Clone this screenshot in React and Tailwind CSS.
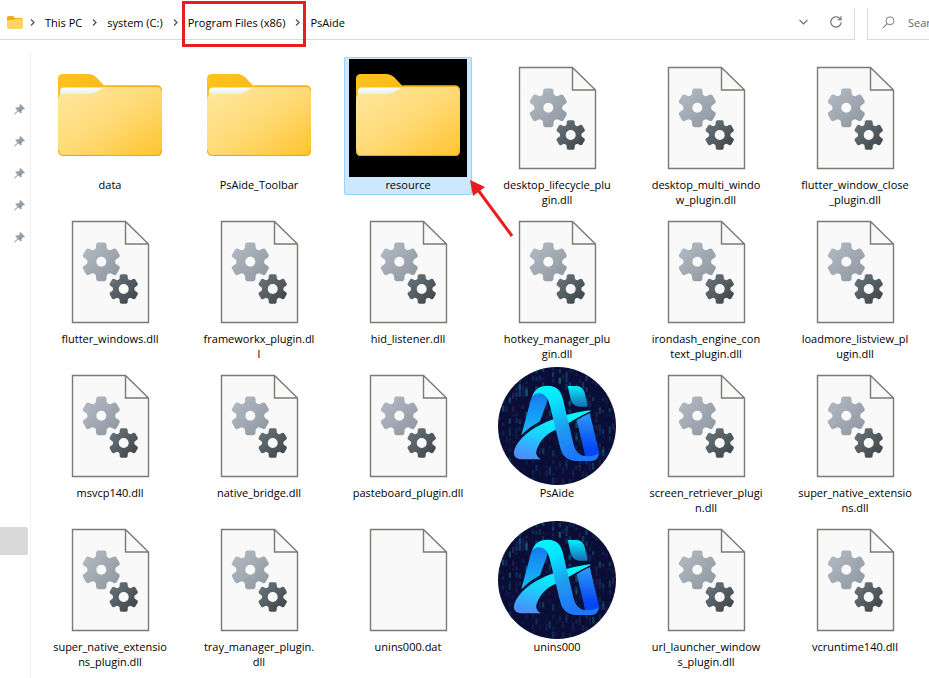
import React from 'react';

const crumbs = ['This PC', 'system (C:)', 'Program Files (x86)', 'PsAide'];

const files = [
  { kind: 'folder', lines: ['data'] },
  { kind: 'folder', lines: ['PsAide_Toolbar'] },
  { kind: 'folder', lines: ['resource'], selected: true },
  { kind: 'dll', lines: ['desktop_lifecycle_plu', 'gin.dll'] },
  { kind: 'dll', lines: ['desktop_multi_windo', 'w_plugin.dll'] },
  { kind: 'dll', lines: ['flutter_window_close', '_plugin.dll'] },
  { kind: 'dll', lines: ['flutter_windows.dll'] },
  { kind: 'dll', lines: ['frameworkx_plugin.dl', 'l'] },
  { kind: 'dll', lines: ['hid_listener.dll'] },
  { kind: 'dll', lines: ['hotkey_manager_plu', 'gin.dll'] },
  { kind: 'dll', lines: ['irondash_engine_con', 'text_plugin.dll'] },
  { kind: 'dll', lines: ['loadmore_listview_pl', 'ugin.dll'] },
  { kind: 'dll', lines: ['msvcp140.dll'] },
  { kind: 'dll', lines: ['native_bridge.dll'] },
  { kind: 'dll', lines: ['pasteboard_plugin.dll'] },
  { kind: 'app', lines: ['PsAide'] },
  { kind: 'dll', lines: ['screen_retriever_plugi', 'n.dll'] },
  { kind: 'dll', lines: ['super_native_extensio', 'ns.dll'] },
  { kind: 'dll', lines: ['super_native_extensio', 'ns_plugin.dll'] },
  { kind: 'dll', lines: ['tray_manager_plugin.', 'dll'] },
  { kind: 'file', lines: ['unins000.dat'] },
  { kind: 'app', lines: ['unins000'] },
  { kind: 'dll', lines: ['url_launcher_window', 's_plugin.dll'] },
  { kind: 'dll', lines: ['vcruntime140.dll'] },
];

// outline of a six-toothed gear with a round hole
function gearPath(cx, cy, r, hole) {
  const pt = (deg, rad) => {
    const a = ((deg - 90) * Math.PI) / 180;
    return `${(cx + rad * Math.cos(a)).toFixed(2)} ${(cy + rad * Math.sin(a)).toFixed(2)}`;
  };
  let d = '';
  for (let i = 0; i < 6; i++) {
    const a = i * 60;
    d += `${i === 0 ? 'M' : 'L'}${pt(a - 22, r * 0.74)} L${pt(a - 16, r * 0.94)} Q${pt(a - 14, r)} ${pt(a - 9, r)} L${pt(a + 9, r)} Q${pt(a + 14, r)} ${pt(a + 16, r * 0.94)} L${pt(a + 22, r * 0.74)} Q${pt(a + 30, r * 0.68)} ${pt(a + 38, r * 0.74)} `;
  }
  return `${d}Z M${cx - hole} ${cy} a${hole} ${hole} 0 1 0 ${hole * 2} 0 a${hole} ${hole} 0 1 0 ${-hole * 2} 0Z`;
}

const bigGear = gearPath(50.3, 48.8, 19.6, 5);
const smallGear = gearPath(72.7, 76, 15, 5);

// speckles in columns behind the app logo, brighter towards the top
const specks = Array.from({ length: 420 }, (_, i) => {
  const r = Math.abs(Math.sin(i * 12.9898) * 43758.5453) % 1;
  const s = Math.abs(Math.sin(i * 78.233) * 12543.123) % 1;
  const y = r * 345;
  return {
    x: 5 + (i % 35) * 10,
    y,
    w: 7,
    h: 6 + s * 14,
    tone: ['#12406f', '#164f80', '#1f2463', '#14616f', '#33285a'][i % 5],
    o: (0.2 + s * 0.6) * (y < 170 ? 1 : 0.6),
  };
});

const swoosh =
  'M280 133 C235 138 195 150 165 161 C118 178 75 206 57 240 C44 266 52 279 75 280 H132 C118 272 115 262 120 249 C130 222 152 200 180 190 C212 174 245 152 280 136Z';

function Defs() {
  return (
    <svg className="absolute h-0 w-0" aria-hidden="true">
      <defs>
        <linearGradient id="tab" x1="0" y1="0" x2="1" y2="1">
          <stop offset="0" stopColor="#ffc31c" />
          <stop offset="1" stopColor="#f6ac0c" />
        </linearGradient>
        <linearGradient id="front" x1="0" y1="0" x2="1" y2="1">
          <stop offset="0" stopColor="#ffe8a2" />
          <stop offset="0.5" stopColor="#ffda76" />
          <stop offset="1" stopColor="#ffc42e" />
        </linearGradient>
        <linearGradient id="paper" x1="0" y1="0" x2="0" y2="1">
          <stop offset="0" stopColor="#ffffff" />
          <stop offset="1" stopColor="#d3d6dc" />
        </linearGradient>
        <linearGradient id="gearLight" x1="0" y1="0" x2="1" y2="1">
          <stop offset="0" stopColor="#b4bdc6" />
          <stop offset="1" stopColor="#8d959e" />
        </linearGradient>
        <linearGradient id="gearDark" x1="0" y1="0" x2="1" y2="1">
          <stop offset="0" stopColor="#6b787f" />
          <stop offset="1" stopColor="#3c4144" />
        </linearGradient>
        <linearGradient id="legLeft" x1="0" y1="0" x2="0" y2="1">
          <stop offset="0" stopColor="#1877f0" />
          <stop offset="1" stopColor="#12c0fb" />
        </linearGradient>
        <linearGradient id="ribbon" x1="0" y1="0" x2="0.35" y2="1">
          <stop offset="0" stopColor="#02fbfd" />
          <stop offset="0.3" stopColor="#06e4fb" />
          <stop offset="0.65" stopColor="#1f9cf0" />
          <stop offset="1" stopColor="#1e78fb" />
        </linearGradient>
        <linearGradient id="swoosh" x1="0.6" y1="0" x2="0.2" y2="1">
          <stop offset="0" stopColor="#02fbfa" />
          <stop offset="0.45" stopColor="#14dcfb" />
          <stop offset="1" stopColor="#4c8cfb" />
        </linearGradient>
        <linearGradient id="stem" x1="0" y1="0" x2="0" y2="1">
          <stop offset="0" stopColor="#2c9cfa" />
          <stop offset="0.75" stopColor="#0546f3" />
        </linearGradient>
        <linearGradient id="dot" x1="0" y1="0" x2="0" y2="1">
          <stop offset="0" stopColor="#02eefc" />
          <stop offset="1" stopColor="#1a6cb4" />
        </linearGradient>
        <clipPath id="disc">
          <circle cx="180" cy="180" r="177" />
        </clipPath>
      </defs>
    </svg>
  );
}

function FolderIcon() {
  return (
    <svg viewBox="0 0 118 118" className="h-full w-full">
      <path d="M7 42 V20 Q7 15 12 15 H37 Q42 15 45.500 18.500 L53 26.500 H106 Q111 26.500 111 31.500 V92 H7Z" fill="url(#tab)" />
      <path d="M9 42 V32.500 Q9 28.500 13 28.500 H56 L46 42Z" fill="url(#paper)" />
      <path d="M7 41 Q7 35 12 35 H37 Q41 35 44 33.500 L51 29.500 Q53.500 28 57 28 H106 Q111 28 111 33 V92 Q111 97 106 97 H12 Q7 97 7 92Z" fill="url(#front)" />
      <path d="M7.500 91 Q7.500 96.500 12.500 96.500 H105.500 Q110.500 96.500 110.500 91" fill="none" stroke="#e8a522" strokeWidth="1" />
      <path d="M54 27 H106 Q110.500 27 110.500 32" fill="none" stroke="#eaae2c" strokeWidth="1" />
    </svg>
  );
}

function FileIcon({ gears }) {
  return (
    <svg viewBox="0 0 118 118" className="h-full w-full">
      <path d="M21.500 8.500 H74.500 L97.500 31 V109.500 H21.500Z" fill="#f9f9f9" />
      <path d="M21.500 8.500 H74.500 L97.500 31 V109.500 H21.500Z M74.500 8.500 V31 H97.500" fill="none" stroke="#7a7974" strokeWidth="1.400" />
      {gears && (
        <>
          <path d={bigGear} fill="url(#gearLight)" fillRule="evenodd" />
          <path d={smallGear} fill="url(#gearDark)" fillRule="evenodd" />
        </>
      )}
    </svg>
  );
}

function AppLogo() {
  return (
    <svg viewBox="3 3 354 354" className="h-full w-full">
      <circle cx="180" cy="180" r="177" fill="#0a0d35" />
      <g clipPath="url(#disc)">
        {specks.map((s, i) => (
          <rect key={i} x={s.x} y={s.y} width={s.w} height={s.h} fill={s.tone} opacity={s.o} />
        ))}
      </g>
      {/* left leg of the A */}
      <path d="M73 208 L97 118 C102 95 110 80 126 78 C145 80 152 95 150 108 L129 166 C106 178 88 192 73 208Z" fill="url(#legLeft)" />
      {/* stem and dot of the i */}
      <path d="M239 162 C252 154 266 146 278 141 L305 252 C309 272 300 284 284 285 L250 280 L264 268Z" fill="url(#stem)" />
      <path d="M212 60 H238 C253 61 261 70 264 84 L272 122 H246 C230 120 223 110 220 96Z" fill="url(#dot)" />
      {/* crossbar */}
      <path d={swoosh} fill="none" stroke="#081238" strokeWidth="8" />
      <path d={swoosh} fill="url(#swoosh)" />
      {/* ribbon over the top and down the right */}
      <path d="M103 98 C110 72 126 59 152 59 C180 59 191 75 197 96 L230 236 C236 256 246 267 262 270 C280 273 294 269 305 262 C303 278 296 285 280 285 H240 C212 285 196 270 190 246 L158 116 C151 92 140 82 126 82 C115 82 107 88 103 98Z" fill="url(#ribbon)" />
    </svg>
  );
}

function Pin() {
  return (
    <svg viewBox="0 0 11 11" className="h-[11px] w-[11px]">
      <path d="M6.300 0 L11 4.600 L10 5.300 L8.900 5.300 L7.600 7 L7.600 8.800 L6.700 9.600 L4.200 7.300 L0.900 10.600 L0.200 10.600 L0.200 9.900 L3.500 6.600 L1.200 4.200 L2 3.400 L3.900 3.400 L5.600 2.200 L5.600 0.800Z" fill="#929da5" />
    </svg>
  );
}

function Chevron() {
  return (
    <svg viewBox="0 0 5 7" className="h-[7px] w-[5px] shrink-0">
      <path d="M1 0.500 L4 3.500 L1 6.500" fill="none" stroke="#555" strokeWidth="1.300" />
    </svg>
  );
}

function Tile({ file }) {
  return (
    <button
      className={`relative flex h-[138px] flex-col items-center border pt-px ${
        file.selected ? 'rounded-xs border-[#99d1ff] bg-[#cce8ff]' : 'border-transparent'
      }`}
    >
      <span className={`h-[118px] w-[118px] shrink-0 ${file.selected ? 'bg-black' : ''}`}>
        {file.kind === 'folder' && <FolderIcon />}
        {file.kind === 'app' && <AppLogo />}
        {(file.kind === 'dll' || file.kind === 'file') && <FileIcon gears={file.kind === 'dll'} />}
      </span>
      <span className="text-center whitespace-nowrap">
        {file.lines.map((line) => (
          <span key={line} className="block">{line}</span>
        ))}
      </span>
      {file.selected && (
        <svg viewBox="0 0 44 58" className="absolute top-[122px] left-[125px] z-10 h-[58px] w-[44px]">
          <path d="M8 10 L42 56" stroke="#e71d1f" strokeWidth="3" />
          <path d="M0 0 L15 7 L3 16Z" fill="#e71d1f" />
        </svg>
      )}
    </button>
  );
}

export default function App() {
  return (
    <div className="flex min-h-screen flex-col overflow-hidden bg-white font-['Open_Sans',sans-serif] text-[11px] leading-[15px] text-black">
      <Defs />
      {/* Address bar */}
      <header className="flex gap-3 pt-2">
        <div className="flex h-8 flex-1 items-center border-r border-b border-[#d9d9d9] pr-3 pb-[3px] pl-[7px]">
          <svg viewBox="0 0 16 13" className="mr-[7px] h-[13px] w-4 shrink-0">
            <path d="M0 2 Q0 0 2 0 H6 L8 2 H14 Q16 2 16 4 V11 H0Z" fill="#f0ac12" />
            <path d="M0 5 Q0 4 1 4 H6 L8 3 H15 Q16 3 16 4 V11.500 Q16 13 14.500 13 H1.500 Q0 13 0 11.500Z" fill="#ffd566" />
          </svg>
          <nav className="flex items-center gap-[10px]">
            {crumbs.map((name, i) => (
              <React.Fragment key={name}>
                <Chevron />
                <button className="relative whitespace-nowrap">
                  {name}
                  {i === 2 && (
                    <span className="absolute -top-[14px] -right-[21px] -bottom-[17px] -left-[6px] border-3 border-[#e71d1f]" />
                  )}
                </button>
              </React.Fragment>
            ))}
          </nav>
          <button className="ml-auto" aria-label="Recent locations">
            <svg viewBox="0 0 9 6" className="h-[6px] w-[9px]">
              <path d="M0.500 0.800 L4.500 4.800 L8.500 0.800" fill="none" stroke="#666" strokeWidth="1.200" />
            </svg>
          </button>
          <button className="ml-[22px]" aria-label="Refresh">
            <svg viewBox="0 0 12 12" className="h-3 w-3">
              <path d="M10.500 3.300 A5.200 5.200 0 1 0 11.200 6.200" fill="none" stroke="#666" strokeWidth="1.100" />
              <path d="M11 0.300 V3.700 H7.600" fill="none" stroke="#666" strokeWidth="1.100" />
            </svg>
          </button>
        </div>
        <label className="flex h-8 w-[62px] items-center gap-[13px] border-b border-l border-[#d9d9d9] pb-[3px] pl-[14px]">
          <svg viewBox="0 0 13 13" className="h-[13px] w-[13px] shrink-0">
            <circle cx="8" cy="4.800" r="4" fill="none" stroke="#7f7a88" strokeWidth="1" />
            <path d="M5.200 7.600 L0.700 12.200" stroke="#7f7a88" strokeWidth="1.100" />
          </svg>
          <input type="text" placeholder="Search" className="w-full min-w-0 outline-none placeholder:text-[#666]" />
        </label>
      </header>

      <div className="flex flex-1">
        {/* Quick access */}
        <aside className="mt-3 w-[31px] shrink-0 border-r border-[#f2f2f2] pt-[41px]">
          {[1, 2, 3, 4, 5].map((n) => (
            <button key={n} aria-label="Unpin" className="flex h-8 w-full items-center pl-[14px]">
              <Pin />
            </button>
          ))}
          <div className="mt-[274px] h-7 w-7 rounded-r-xs bg-[#d9d9d9]" />
        </aside>

        {/* Files */}
        <main className="grid flex-1 grid-cols-[repeat(auto-fill,128px)] content-start gap-x-[21px] gap-y-4 pt-[17px] pb-4 pl-[15px]">
          {files.map((file, i) => (
            <Tile key={i} file={file} />
          ))}
        </main>
      </div>
    </div>
  );
}
